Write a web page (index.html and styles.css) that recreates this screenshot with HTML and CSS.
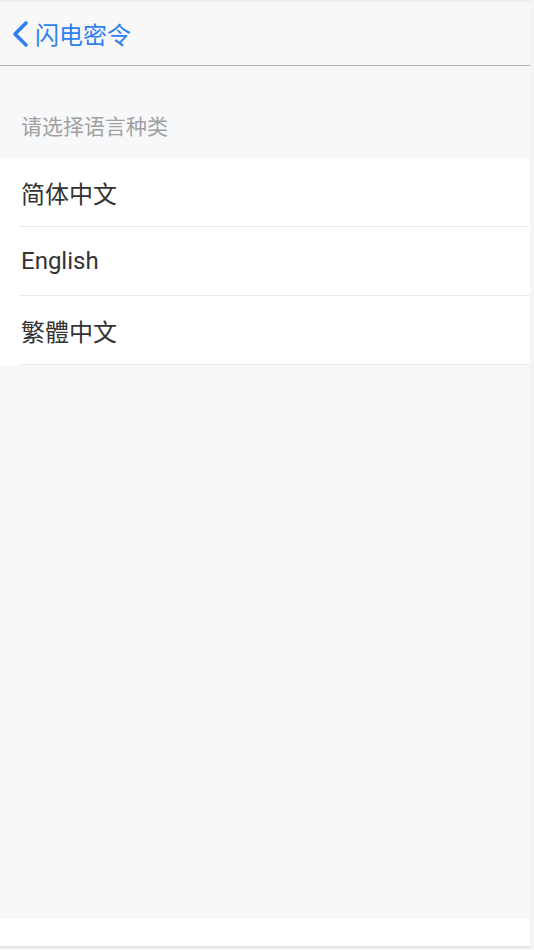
FILE: index.html
```html
<!DOCTYPE html>
<html lang="zh-CN">
<head>
    <meta charset="UTF-8">
    <meta name="viewport" content="width=device-width, initial-scale=1.0">
    <title>语言设置</title>
    <link rel="stylesheet" href="styles.css">
</head>
<body>
    <div class="page">
        <div class="header">
            <a class="back" href="#">
                <svg class="back-icon" width="20" height="28" viewBox="0 0 20 28">
                    <path d="M16 3 L5 14 L16 25" fill="none" stroke="#2f7ff0" stroke-width="3.6" stroke-linecap="round" stroke-linejoin="round"/>
                </svg>
                <span>闪电密令</span>
            </a>
        </div>

        <div class="content">
            <div class="section-title">请选择语言种类</div>
            <ul class="lang-list">
                <li class="lang-item"><span>简体中文</span></li>
                <li class="lang-item"><span>English</span></li>
                <li class="lang-item"><span>繁體中文</span></li>
            </ul>
        </div>

        <div class="footer"></div>
    </div>
</body>
</html>
```
FILE: styles.css
```css
* {
    margin: 0;
    padding: 0;
    box-sizing: border-box;
    font-family: Roboto, 'Noto Sans CJK SC', sans-serif;
}

body {
    background-color: #f3f4f6;
    width: 534px;
    height: 950px;
    overflow: hidden;
}

.page {
    width: 530px;
    height: 948px;
    display: flex;
    flex-direction: column;
    background-color: #f7f8fa;
    border-top: 2px solid #ededed;
    border-bottom: 2px solid #e4e6ea;
}

.header {
    height: 64px;
    background-color: #f8f8f8;
    border-bottom: 1px solid #b4b4b4;
    display: flex;
    align-items: center;
    padding-left: 10px;
}

.back {
    display: flex;
    align-items: center;
    color: #2f7ff0;
    text-decoration: none;
    font-size: 24px;
}

.back-icon {
    margin-right: 5px;
    margin-top: 1px;
}

.content {
    flex: 1;
}

.section-title {
    padding: 49px 21px 0;
    height: 92px;
    font-size: 21px;
    line-height: 25px;
    color: #a1a1a1;
}

.lang-list {
    list-style: none;
    background-color: white;
}

.lang-item {
    height: 69px;
    margin-left: 20px;
    border-bottom: 1px solid #ebebeb;
    display: flex;
    align-items: center;
    font-size: 24px;
    color: #333;
    padding-left: 1px;
}

.footer {
    height: 27px;
    background-color: white;
}
```
